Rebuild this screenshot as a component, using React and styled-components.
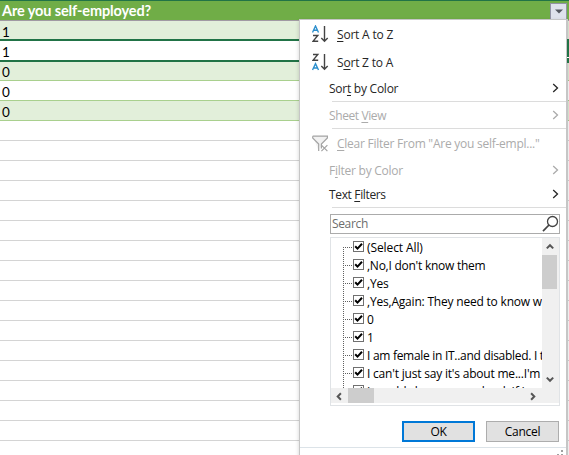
import React from "react";
import styled, { createGlobalStyle } from "styled-components";

const Global = createGlobalStyle`
  * { box-sizing: border-box; }
  html, body { margin: 0; overflow: hidden; background: #fff; }
`;

const Screen = styled.main`
  position: relative;
  width: 569px;
  height: 455px;
  overflow: hidden;
  font-family: "Open Sans", "Noto Sans", sans-serif;
  font-size: 12px;
  color: #262626;
`;

const Sheet = styled.div`
  display: flex;
  flex-direction: column;
`;

const HeaderRow = styled.div`
  display: flex;
  align-items: center;
  justify-content: space-between;
  height: 21px;
  padding: 1px 2px 0;
  background: #70ad47;
  border-top: 1px solid #217346;
  border-bottom: 1px solid #a19aa3;
  color: #fff;
  font: bold 14.5px/18px Lato, sans-serif;
  letter-spacing: ${(p) => p.$spacing}px;
`;

const FilterButton = styled.button`
  display: flex;
  align-items: center;
  justify-content: center;
  width: 17px;
  height: 17px;
  padding: 0;
  border: 1px solid #9292a4;
  background: #dfe2ec;
`;

const Row = styled.div`
  flex: none;
  height: 20px;
  padding-left: 2px;
  background: ${(p) => (p.$banded ? "#e2efda" : "#fff")};
  border-bottom: 1px solid ${(p) => (p.$table ? "#a9d08e" : "#d4d4d4")};
  ${(p) => p.$edge === "above" && "border-bottom: 2px solid #217346;"}
  ${(p) => p.$edge === "selected" && "border-bottom: 1px solid #217346;"}
  ${(p) => p.$edge === "below" && "border-top: 1px solid #217346;"}
  color: #000;
  font: 13.5px/20px Lato, sans-serif;
  line-height: ${(p) => (p.$edge === "below" ? 21 : 23)}px;
`;

const SelectionEdge = styled.div`
  position: absolute;
  left: 567px;
  top: 39px;
  width: 2px;
  height: 24px;
  background: #217346;
  border-bottom: 5px solid #217346;
  box-shadow: inset 0 -1px #fff;
`;

const Menu = styled.section`
  position: absolute;
  left: 299px;
  top: 19px;
  width: 269px;
  height: 440px;
  display: flex;
  flex-direction: column;
  background: #fff;
  border: 1px solid #c6c6c6;
  border-right-width: 2px;
  box-shadow: 0 2px 4px rgba(0, 0, 0, 0.18);
`;

const Item = styled.div`
  flex: none;
  display: grid;
  grid-template-columns: ${(p) => (p.$icon ? "25px" : "17px")} 1fr 8px;
  align-items: center;
  height: ${(p) => p.$height}px;
  padding: 0 6px 0 12px;
  color: ${(p) => (p.$disabled ? "#ababab" : "#262626")};
  letter-spacing: ${(p) => p.$spacing}px;
  white-space: nowrap;
  svg { display: block; }
`;

const Key = styled.span`
  text-decoration: underline;
  text-underline-offset: 2px;
  text-decoration-thickness: 1px;
`;

const Separator = styled.div`
  flex: none;
  height: 1px;
  margin-left: 32px;
  background: #dcdcdc;
`;

const SearchBox = styled.div`
  flex: none;
  display: flex;
  align-items: center;
  justify-content: space-between;
  width: 230px;
  height: 20px;
  margin: 6px 0 3px 30px;
  padding: 0 0 1px 1px;
  border: 1px solid #ababab;
  color: #6d6d6d;
  letter-spacing: -0.35px;
`;

const ListBox = styled.div`
  flex: none;
  display: grid;
  grid-template: 150px 17px / 211px 17px;
  width: 230px;
  height: 169px;
  margin-left: 30px;
  border: 1px solid #e0e3e6;
`;

const Tree = styled.div`
  position: relative;
  overflow: hidden;
  color: #000;
`;

const Branch = styled.svg`
  position: absolute;
  left: 12px;
  top: 9px;
`;

const TreeItem = styled.div`
  display: flex;
  align-items: center;
  gap: 3px;
  height: 18px;
  padding-left: 22px;
  white-space: nowrap;
  letter-spacing: ${(p) => p.$spacing}px;
`;

const Check = styled.span`
  flex: none;
  display: block;
  width: 11px;
  height: 11px;
  margin-top: -1px;
  border: 1px solid #707070;
  background: #fff;
  svg { display: block; }
`;

const VScroll = styled.div`
  display: flex;
  flex-direction: column;
  justify-content: space-between;
  background: #f0f0f0;
`;

const VThumb = styled.div`
  width: 15px;
  height: 34px;
  margin-bottom: 82px;
  background: #cdcdcd;
`;

const HScroll = styled.div`
  display: flex;
  align-items: stretch;
  height: 15px;
  background: #f0f0f0;
`;

const HThumb = styled.div`
  width: 26px;
  margin-right: 151px;
  background: #cdcdcd;
`;

const Corner = styled.div`
  height: 15px;
  background: #f0f0f0;
`;

const Actions = styled.div`
  flex: none;
  display: flex;
  gap: 11px;
  margin: 15px 0 5px 102px;
`;

const Button = styled.button`
  width: 73px;
  height: 21px;
  padding: 0;
  background: #e1e1e1;
  border: ${(p) => (p.$primary ? "2px solid #0078d7" : "1px solid #adadad")};
  color: #000;
  font: 12px/15px "Open Sans", sans-serif;
  letter-spacing: -0.3px;
`;

const Grip = styled.div`
  display: flex;
  justify-content: flex-end;
  height: 12px;
  padding: 2px 2px 0 0;
  border-top: 1px solid #dce3e8;
`;

const Chevron = () => (
  <svg width="8" height="11" viewBox="0 0 8 11">
    <path d="M1.2 1L5.5 5L1.2 9" fill="none" stroke="currentColor" strokeWidth="1.3" />
  </svg>
);

const SortIcon = ({ reverse }) => (
  <svg width="18" height="19" viewBox="0 0 18 19" fill="none" strokeWidth="1.4">
    <path d={reverse ? "M.5 17L3.5 10.6L6.5 17M1.5 15H5.5" : "M.5 7.5L3.5 1L6.5 7.5M1.5 5.3H5.5"} stroke="#2c8fcd" />
    <path d={reverse ? "M1 1.5H5.8L1 7.3H6.2" : "M1 10.5H5.8L1 16.3H6.2"} stroke="#444" />
    <path d="M12.5 1V16.2M9.3 13L12.5 16.2L15.7 13" stroke="#444" />
  </svg>
);

const ClearIcon = () => (
  <svg width="18" height="18" viewBox="0 0 18 18" fill="none" stroke="#a3a3a3" strokeWidth="1.2">
    <path d="M.7 1.2H15.4V3L9.4 9V13.5M.7 1.2V3L6.7 9V16" fill="#f2f2f2" />
    <path d="M9.4 10.2L15.4 16.2M15.4 10.2L9.4 16.2" />
  </svg>
);

const Arrow = ({ turn }) => (
  <svg width="17" height="17" viewBox="0 0 17 17">
    <path d="M4.8 10.4L8 7.2L11.2 10.4" transform={`rotate(${turn} 8 8.5)`} fill="none" stroke="#565656" strokeWidth="2" />
  </svg>
);

const menuItems = [
  { height: 28, icon: "az", text: ["", "S", "ort A to Z"], spacing: -0.2 },
  { height: 28, icon: "za", text: ["S", "o", "rt Z to A"], spacing: -0.2 },
  { height: 25, text: ["Sor", "t", " by Color"], arrow: true, line: true, spacing: -0.25 },
  { height: 26, text: ["Sheet ", "V", "iew"], arrow: true, disabled: true, line: true, spacing: -0.4 },
  { height: 29, icon: "clear", text: ["", "C", 'lear Filter From "Are you self-empl..."'], disabled: true, spacing: -0.25 },
  { height: 24, text: ["F", "i", "lter by Color"], arrow: true, disabled: true, spacing: -0.25 },
  { height: 25, text: ["Text ", "F", "ilters"], arrow: true, line: true, spacing: -0.35 },
];

const filterValues = [
  ["(Select All)", -0.1],
  [",No,I don't know them", -0.25],
  [",Yes", -0.2],
  [",Yes,Again: They need to know w", -0.2],
  ["0", 0],
  ["1", 0],
  ["I am female in IT..and disabled. I t", -0.29],
  ["I can't just say it's about me...I'm", -0.2],
  ["I would choose my school. If I w", -0.2],
];

const rows = [
  { value: "1", banded: true, table: true, edge: "above" },
  { value: "1", table: true, edge: "selected" },
  { value: "0", banded: true, table: true, edge: "below" },
  { value: "0", table: true },
  { value: "0", banded: true, table: true },
  ...Array.from({ length: 17 }, () => ({})),
];

const icons = { az: <SortIcon />, za: <SortIcon reverse />, clear: <ClearIcon /> };

export default function App() {
  return (
    <Screen>
      <Global />
      <Sheet>
        <HeaderRow $spacing={-0.12}>
          Are you self-employed?
          <FilterButton aria-label="Filter">
            <svg width="8" height="5" viewBox="0 0 8 5"><path d="M0 .5H8L4 4.5Z" fill="#555861" /></svg>
          </FilterButton>
        </HeaderRow>
        {rows.map((r, i) => (
          <Row key={i} $banded={r.banded} $table={r.table} $edge={r.edge}>{r.value}</Row>
        ))}
      </Sheet>
      <Menu>
        {menuItems.map((m) => (
          <React.Fragment key={m.text.join("")}>
            <Item $height={m.height} $icon={m.icon} $disabled={m.disabled} $spacing={m.spacing}>
              <span>{icons[m.icon]}</span>
              <span>{m.text[0]}<Key>{m.text[1]}</Key>{m.text[2]}</span>
              {m.arrow && <Chevron />}
            </Item>
            {m.line && <Separator />}
          </React.Fragment>
        ))}
        <SearchBox>
          Search
          <svg width="17" height="18" viewBox="0 0 17 18" fill="none" stroke="#444" strokeWidth="1.3">
            <circle cx="10.5" cy="6.5" r="5" /><path d="M7 10L1 16.2" strokeWidth="1.7" />
          </svg>
        </SearchBox>
        <ListBox>
          <Tree>
            <Branch width="11" height="145">
              <path d={"M.5 0V145" + filterValues.map((_, i) => `M0 ${i * 18 + 0.5}H9`).join("")} stroke="#606060" strokeDasharray="1 1" />
            </Branch>
            {filterValues.map(([label, spacing]) => (
              <TreeItem key={label} $spacing={spacing}>
                <Check>
                  <svg width="9" height="9" viewBox="0 0 9 9"><path d="M1.2 4.2L3.5 6.6L8 1.8" fill="none" stroke="#000" strokeWidth="2" /></svg>
                </Check>
                <span>{label}</span>
              </TreeItem>
            ))}
          </Tree>
          <VScroll><Arrow turn={0} /><VThumb /><Arrow turn={180} /></VScroll>
          <HScroll><Arrow turn={-90} /><HThumb /><Arrow turn={90} /></HScroll>
          <Corner />
        </ListBox>
        <Actions>
          <Button $primary>OK</Button>
          <Button>Cancel</Button>
        </Actions>
        <Grip>
          <svg width="9" height="9" fill="#a0a0a0"><path d="M6 0h2v2h-2zM2 4h2v2h-2zM6 4h2v2h-2z" /></svg>
        </Grip>
      </Menu>
      <SelectionEdge />
    </Screen>
  );
}
